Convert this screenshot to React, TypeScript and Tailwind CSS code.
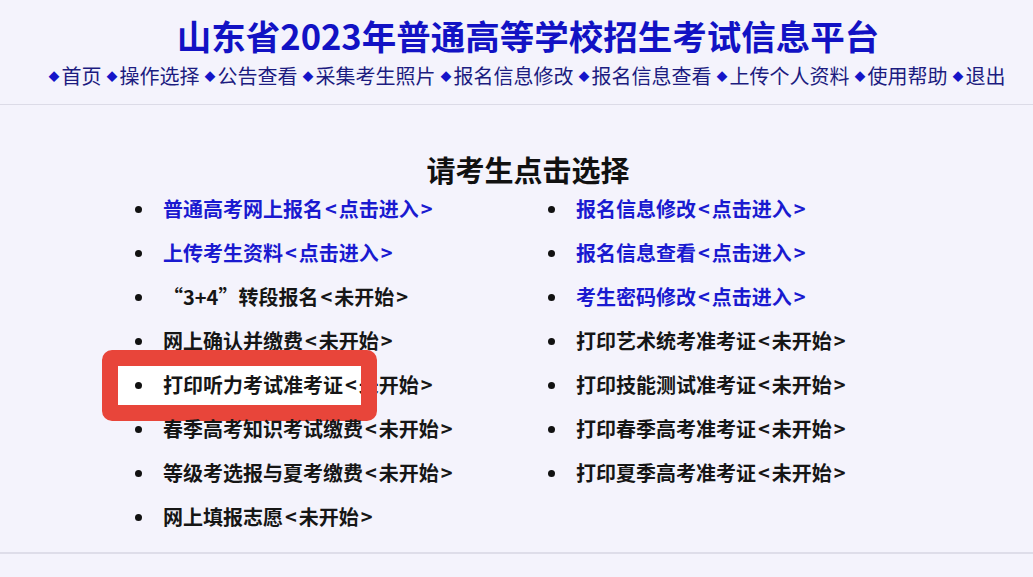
import React from "react";

const FONT = { fontFamily: '"Noto Sans CJK SC", "Noto Sans", sans-serif' };

type Item = { text: string; link: boolean; highlight?: boolean };

const left: Item[] = [
  { text: "普通高考网上报名<点击进入>", link: true },
  { text: "上传考生资料<点击进入>", link: true },
  { text: "“3+4”转段报名<未开始>", link: false },
  { text: "网上确认并缴费<未开始>", link: false },
  { text: "打印听力考试准考证<未开始>", link: false, highlight: true },
  { text: "春季高考知识考试缴费<未开始>", link: false },
  { text: "等级考选报与夏考缴费<未开始>", link: false },
  { text: "网上填报志愿<未开始>", link: false },
];

const right: Item[] = [
  { text: "报名信息修改<点击进入>", link: true },
  { text: "报名信息查看<点击进入>", link: true },
  { text: "考生密码修改<点击进入>", link: true },
  { text: "打印艺术统考准考证<未开始>", link: false },
  { text: "打印技能测试准考证<未开始>", link: false },
  { text: "打印春季高考准考证<未开始>", link: false },
  { text: "打印夏季高考准考证<未开始>", link: false },
];

const nav = ["首页", "操作选择", "公告查看", "采集考生照片", "报名信息修改", "报名信息查看", "上传个人资料", "使用帮助", "退出"];

function Label({ text }: { text: string }) {
  const i = text.indexOf("<");
  const main = text.slice(0, i);
  const inner = text.slice(i + 1, -1);
  return (
    <>
      {main}
      <span className="px-[2px]">&lt;</span>
      {inner}
      <span className="px-[2px]">&gt;</span>
    </>
  );
}

function Row({ item }: { item: Item }) {
  return (
    <div className="relative flex h-[44px] items-center">
      {item.highlight && (
        <div className="pointer-events-none absolute left-[-33px] top-[-13px] h-[71px] w-[275px] rounded-[10px] bg-white" />
      )}
      <span className="relative block h-[7px] w-[7px] shrink-0 rounded-full bg-[#111]" />
      <span
        className={
          "relative ml-[21px] whitespace-nowrap text-[20px] font-bold leading-[28px] " +
          (item.link ? "text-[#1a1ad0]" : "text-[#161616]")
        }
      >
        <Label text={item.text} />
      </span>
      {item.highlight && (
        <div className="pointer-events-none absolute left-[-33px] top-[-13px] h-[71px] w-[275px] rounded-[10px] border-[16px] border-[#e8453a]" />
      )}
    </div>
  );
}

export default function App() {
  return (
    <div className="min-h-[577px] w-full bg-[#f4f3fc]" style={FONT}>
      <header className="border-b border-[#dcdbe7] pb-[14px] pt-[13px] text-center">
        <h1 className="pl-[23px] text-[34.5px] font-bold leading-[44px] text-[#1212c4]">山东省2023年普通高等学校招生考试信息平台</h1>
        <nav className="mt-[5px] whitespace-nowrap pl-[21px] text-[20px] leading-[28px] text-[#1c1c80]">
          {nav.map((n, i) => (
            <span key={n} className={i > 0 ? "ml-[5px]" : ""}>
              <span className="mr-[2px] text-[11px] text-[#1515c8] align-[3px]">◆</span>
              {n}
            </span>
          ))}
        </nav>
      </header>
      <main className="border-b-2 border-[#dedde9] pb-[13px]">
        <h2 className="mt-[46px] pl-[23px] text-center text-[29px] font-bold leading-[36px] text-[#111]">请考生点击选择</h2>
        <div className="flex pl-[135px]">
          <div className="w-[413px]">
            {left.map((it) => (
              <Row key={it.text} item={it} />
            ))}
          </div>
          <div>
            {right.map((it) => (
              <Row key={it.text} item={it} />
            ))}
          </div>
        </div>
      </main>
    </div>
  );
}
